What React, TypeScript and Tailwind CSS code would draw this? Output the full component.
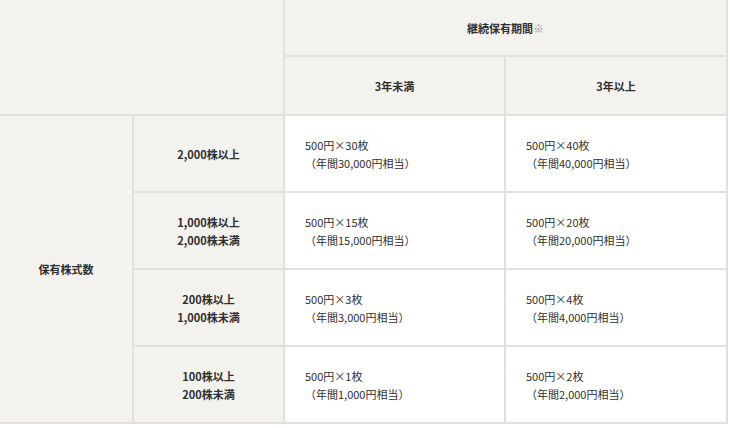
import { Fragment } from "react";

const rows = [
  { label: ["2,000株以上"], under: ["500円×30枚", "（年間30,000円相当）"], over: ["500円×40枚", "（年間40,000円相当）"] },
  { label: ["1,000株以上", "2,000株未満"], under: ["500円×15枚", "（年間15,000円相当）"], over: ["500円×20枚", "（年間20,000円相当）"] },
  { label: ["200株以上", "1,000株未満"], under: ["500円×3枚", "（年間3,000円相当）"], over: ["500円×4枚", "（年間4,000円相当）"] },
  { label: ["100株以上", "200株未満"], under: ["500円×1枚", "（年間1,000円相当）"], over: ["500円×2枚", "（年間2,000円相当）"] },
];

const Lines = ({ lines }: { lines: string[] }) => (
  <div>
    {lines.map((l) => (
      <p key={l}>{l}</p>
    ))}
  </div>
);

export default function App() {
  return (
    <div
      className="h-[428px] w-[730px] overflow-hidden bg-white text-[11px] leading-[18px] text-[#2f2f2f]"
      style={{ fontFamily: '"Noto Sans CJK JP", "Noto Sans", sans-serif' }}
    >
      <div className="inline-grid grid-cols-[132px_149px_219px_220px] grid-rows-[55px_57px_75px_75px_75px_75px] gap-[2px] bg-[#e2e0dd] pr-[2px] pb-[2px]">
        {/* header */}
        <div className="col-span-2 row-span-2 bg-[#f4f2ee]" />
        <div className="col-span-2 flex items-center justify-center bg-[#f4f2ee] font-bold">
          継続保有期間<span className="font-normal text-[#999]">※</span>
        </div>
        <div className="flex items-center justify-center bg-[#f4f2ee] font-bold">3年未満</div>
        <div className="flex items-center justify-center bg-[#f4f2ee] font-bold">3年以上</div>

        {/* body */}
        <div className="row-span-4 flex items-center justify-center bg-[#f4f2ee] font-bold">保有株式数</div>
        {rows.map((r) => (
          <Fragment key={r.label[0]}>
            <div className="flex items-center justify-center bg-[#f4f2ee] text-center font-bold">
              <Lines lines={r.label} />
            </div>
            <div className="flex items-center bg-white pl-[20px]">
              <Lines lines={r.under} />
            </div>
            <div className="flex items-center bg-white pl-[20px]">
              <Lines lines={r.over} />
            </div>
          </Fragment>
        ))}
      </div>
    </div>
  );
}
